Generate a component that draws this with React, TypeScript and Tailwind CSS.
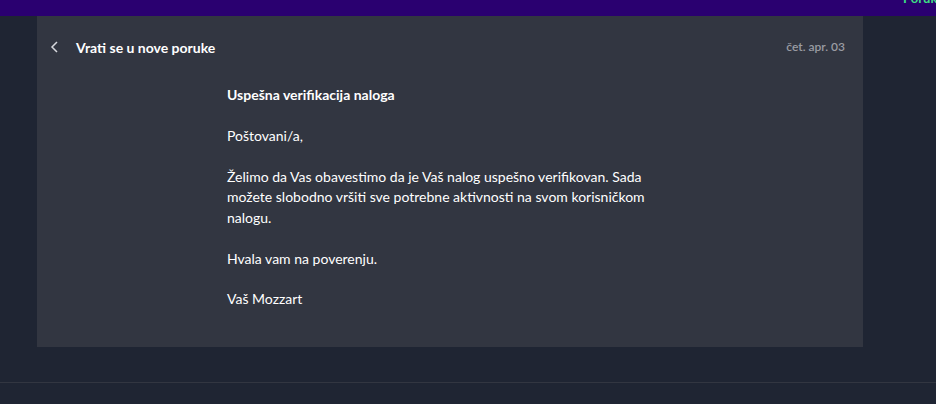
import React from 'react';

const App = () => {
  return (
    <div className="w-[936px] h-[404px] overflow-hidden bg-[#1f2533] font-['Lato','Noto_Sans',sans-serif] text-white">
      {/* Top bar */}
      <div className="h-4 bg-[#2a0070] relative overflow-hidden">
        <span className="absolute right-[-8px] top-[-11px] text-[13px] font-bold text-[#3ddc84]">Poruke</span>
      </div>

      <div className="h-[367px] border-b border-[#323641] px-[37px] pr-[73px]">
        {/* Message card */}
        <div className="bg-[#323641] h-[331px]">
          <div className="flex items-center justify-between h-[62px] pl-[10px] pr-[18px]">
            <div className="flex items-center gap-[13px]">
              <svg width="16" height="16" viewBox="0 0 16 16" fill="none" stroke="#d7d9de" strokeWidth="1.5">
                <path d="M10 3 L5 8 L10 13" />
              </svg>
              <span className="text-[14px] font-bold">Vrati se u nove poruke</span>
            </div>
            <span className="text-[12px] font-semibold text-[#9a9ca3]">čet. apr. 03</span>
          </div>

          <div className="flex justify-center">
            <div className="w-[446px] text-[14px] leading-[20.5px] text-white">
              <p className="font-bold mt-[7px]">Uspešna verifikacija naloga</p>
              <p className="mt-[20px]">Poštovani/a,</p>
              <p className="mt-[20.5px]">
                Želimo da Vas obavestimo da je Vaš nalog uspešno verifikovan. Sada možete slobodno vršiti sve potrebne aktivnosti na svom korisničkom nalogu.
              </p>
              <p className="mt-[20.5px]">Hvala vam na poverenju.</p>
              <p className="mt-[20px]">Vaš Mozzart</p>
            </div>
          </div>
        </div>
      </div>
    </div>
  );
};

export default App;
